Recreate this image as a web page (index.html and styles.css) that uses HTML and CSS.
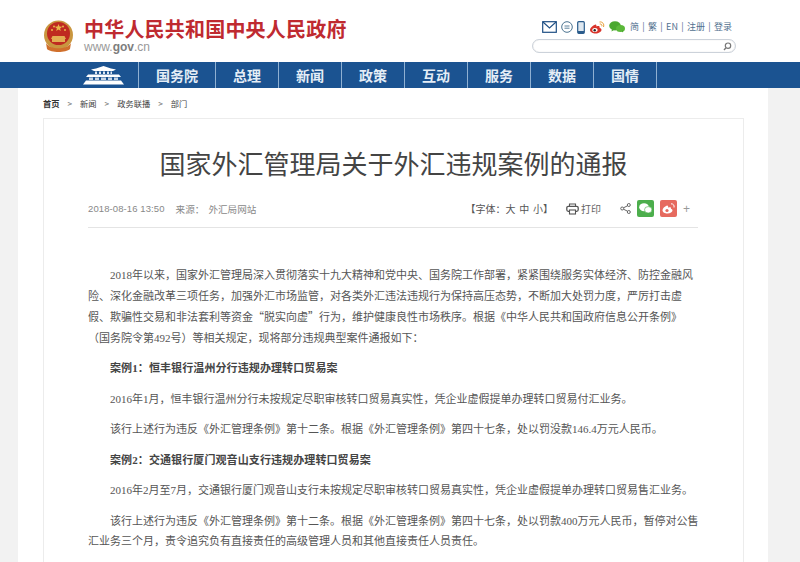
FILE: index.html
```html
<!DOCTYPE html>
<html lang="zh-CN">
<head>
<meta charset="utf-8">
<title>国家外汇管理局关于外汇违规案例的通报</title>
<link rel="stylesheet" href="styles.css">
</head>
<body>
<header class="top">
  <div class="brand">
    <svg class="emblem" width="31" height="33" viewBox="0 0 31 33">
      <circle cx="15.5" cy="15" r="14.5" fill="#c9963f"/>
      <circle cx="15.5" cy="13.5" r="11.5" fill="#bf2a20"/>
      <path d="M15.5 4l1 2.6 2.7.1-2.1 1.7.7 2.6-2.3-1.5-2.3 1.5.7-2.6-2.1-1.7 2.7-.1z" fill="#e8b84a"/>
      <circle cx="9" cy="10" r="1" fill="#e8b84a"/><circle cx="22" cy="10" r="1" fill="#e8b84a"/>
      <circle cx="11" cy="6.500" r="1" fill="#e8b84a"/><circle cx="20" cy="6.500" r="1" fill="#e8b84a"/>
      <path d="M8 19h15l-1.500-3h-12zM9 19h13v3H9z" fill="#e3ad52"/>
      <path d="M3 23c4 7 21 7 25 0l-1 6c-4 4-19 4-23 0z" fill="#d0702c"/>
    </svg>
    <div class="brand-text">
      <div class="site-name">中华人民共和国中央人民政府</div>
      <div class="site-url">www.<b>gov</b>.cn</div>
    </div>
  </div>
  <div class="tools">
    <div class="tool-row">
      <svg class="ic" width="15" height="12" viewBox="0 0 15 12"><rect x=".7" y=".7" width="13.600" height="10.600" fill="none" stroke="#1f4f84" stroke-width="1.200"/><path d="M1 1l6.500 6L14 1" fill="none" stroke="#1f4f84" stroke-width="1.100"/></svg>
      <svg class="ic" width="12" height="12" viewBox="0 0 12 12"><circle cx="6" cy="6" r="5.300" fill="none" stroke="#4b7390" stroke-width="1"/><path d="M3.500 5h5M3.500 7.200h5" stroke="#4b7390" stroke-width=".9"/></svg>
      <svg class="ic" width="8" height="13" viewBox="0 0 8 13"><rect x=".7" y=".7" width="6.600" height="11.600" rx="1" fill="#dfe8f0" stroke="#2b5c8c" stroke-width="1.200"/><rect x="1" y="10" width="6" height="2" fill="#2b5c8c"/></svg>
      <svg class="ic" width="16" height="13" viewBox="0 0 16 13"><path d="M6.500 3.500C3.500 4.500 1 7 1 9c0 2.300 3 3.500 5.500 3.500 3.300 0 6-1.700 6-3.700 0-1.300-1.300-1.700-2-2 .5-1.500-.7-2.300-3-1.200 0-1.300-.3-2.400-1-2.100z" fill="#d9342b"/><ellipse cx="6" cy="9" rx="2.700" ry="2.100" fill="#fff"/><circle cx="5.700" cy="9.200" r="1.200" fill="#222"/><path d="M10.500 1c3-.5 5 2 4 5M10.800 3c1.500-.2 2.500 1 2 2.300" fill="none" stroke="#e79a2e" stroke-width="1"/></svg>
      <svg class="ic" width="16" height="12" viewBox="0 0 16 12"><ellipse cx="6" cy="4.800" rx="5.800" ry="4.600" fill="#4aa82f"/><ellipse cx="11.500" cy="7.500" rx="4.500" ry="3.600" fill="#5bb83a"/><path d="M3 8l-.500 2.500L5 9zM12.500 10l1.500 1.500V9z" fill="#4aa82f"/></svg>
      <nav class="tool-links"><a>简</a><i>|</i><a>繁</a><i>|</i><a>EN</a><i>|</i><a>注册</a><i>|</i><a>登录</a></nav>
    </div>
    <div class="search">
      <svg width="9" height="9" viewBox="0 0 9 9"><circle cx="5" cy="3.700" r="2.700" fill="none" stroke="#777" stroke-width="1.200"/><path d="M3 5.700L1 8" stroke="#777" stroke-width="1.300"/></svg>
    </div>
  </div>
</header>

<nav class="mainnav">
  <div class="gate-cell">
    <svg width="41" height="19" viewBox="0 0 41 19">
      <path d="M8 3.500L13 2.500 20.500 0 28 2.500l5 1L30 5H11z" fill="#fff"/>
      <path d="M12 5.500h2v2.500h-2zM16 5.500h2v2.500h-2zM20 5.500h2v2.500h-2zM24 5.500h2v2.500h-2zM27.500 5.500h1.500v2.500h-1.500z" fill="#dfe8f2"/>
      <path d="M5 8.500h31l2 2.500H3z" fill="#fff"/>
      <path d="M6 11.500h4v2.500H6zM12 11.500h4v2.500h-4zM18 11.500h5v2.500h-5zM25 11.500h4v2.500h-4zM31 11.500h4v2.500h-4z" fill="#c8d6e6"/>
      <path d="M3 14.500h35l3 4H0z" fill="#fff"/>
    </svg>
  </div>
  <a>国务院</a><a>总理</a><a>新闻</a><a>政策</a><a>互动</a><a>服务</a><a>数据</a><a>国情</a>
</nav>

<main class="wrap">
  <div class="crumbs"><b>首页</b><i>&gt;</i><span>新闻</span><i>&gt;</i><span>政务联播</span><i>&gt;</i><span>部门</span></div>
  <article class="card">
    <h1>国家外汇管理局关于外汇违规案例的通报</h1>
    <div class="meta">
      <div class="meta-left"><span class="date">2018-08-16 13:50</span><span class="src">来源：</span><span>外汇局网站</span></div>
      <div class="meta-right">
        <span class="fontsize">【字体：大 中 小】</span>
        <svg class="print-ic" width="13" height="12" viewBox="0 0 13 12"><path d="M3.500 3V1h6v2" fill="none" stroke="#555" stroke-width="1.100"/><rect x=".8" y="3.300" width="11.400" height="5" rx="1.500" fill="none" stroke="#555" stroke-width="1.300"/><rect x="3.500" y="7" width="6" height="4" fill="#fff" stroke="#555" stroke-width="1.100"/></svg>
        <span class="print">打印</span>
        <svg class="share-ic" width="11" height="11" viewBox="0 0 11 11"><circle cx="2.200" cy="5.500" r="1.500" fill="none" stroke="#666"/><circle cx="8.800" cy="2" r="1.500" fill="none" stroke="#666"/><circle cx="8.800" cy="9" r="1.500" fill="none" stroke="#666"/><path d="M3.500 4.800l4-2M3.500 6.200l4 2" stroke="#666"/></svg>
        <span class="sq wx"><svg width="13" height="11" viewBox="0 0 13 11"><ellipse cx="5" cy="4.200" rx="4.800" ry="4" fill="#fff"/><ellipse cx="9.200" cy="6.800" rx="3.700" ry="3.200" fill="#fff" stroke="#4cae4c" stroke-width=".6"/></svg></span>
        <span class="sq wb"><svg width="13" height="11" viewBox="0 0 13 11"><path d="M5 2.500C2.500 3.500 .5 5.500.5 7.200.5 9.200 3 10.500 5.500 10.500c2.800 0 5-1.500 5-3.200 0-1-1-1.400-1.600-1.600.5-1.300-.6-1.900-2.500-1 0-1.200-.8-2.700-1.400-2.200z" fill="#fff"/><circle cx="5" cy="7.500" r="1.600" fill="#e66a5f"/><path d="M9 .8c2-.2 3.700 1.500 3 3.700" fill="none" stroke="#fff"/></svg></span>
        <span class="plus">+</span>
      </div>
    </div>
    <div class="body">
      <p class="ind">2018年以来，国家外汇管理局深入贯彻落实十九大精神和党中央、国务院工作部署，紧紧围绕服务实体经济、防控金融风险、深化金融改革三项任务，加强外汇市场监管，对各类外汇违法违规行为保持高压态势，不断加大处罚力度，严厉打击虚假、欺骗性交易和非法套利等资金<span class="cq">“</span>脱实向虚<span class="cq">”</span>行为，维护健康良性市场秩序。根据《中华人民共和国政府信息公开条例》（国务院令第492号）等相关规定，现将部分违规典型案件通报如下：</p>
      <p class="ind"><strong>案例1：恒丰银行温州分行违规办理转口贸易案</strong></p>
      <p class="ind">2016年1月，恒丰银行温州分行未按规定尽职审核转口贸易真实性，凭企业虚假提单办理转口贸易付汇业务。</p>
      <p class="ind">该行上述行为违反《外汇管理条例》第十二条。根据《外汇管理条例》第四十七条，处以罚没款146.4万元人民币。</p>
      <p class="ind"><strong>案例2：交通银行厦门观音山支行违规办理转口贸易案</strong></p>
      <p class="ind">2016年2月至7月，交通银行厦门观音山支行未按规定尽职审核转口贸易真实性，凭企业虚假提单办理转口贸易售汇业务。</p>
      <p class="ind wide">该行上述行为违反《外汇管理条例》第十二条。根据《外汇管理条例》第四十七条，处以罚款400万元人民币，暂停对公售汇业务三个月，责令追究负有直接责任的高级管理人员和其他直接责任人员责任。</p>
    </div>
  </article>
</main>
</body>
</html>
```
FILE: styles.css
```css
html, body { margin: 0; padding: 0; height: 562px; overflow: hidden; }
body { background: #f2f2f2; font-family: "Liberation Serif", "Noto Sans CJK SC", serif; color: #444; }
a { text-decoration: none; color: inherit; }
i { font-style: normal; }

.top { height: 62px; background: #fff; display: flex; justify-content: space-between; }
.brand { display: flex; padding: 19px 0 0 43px; gap: 10px; align-items: flex-start; }
.emblem { margin-top: 1px; }
.site-name { font: bold 20px/20px "Noto Sans CJK SC", sans-serif; letter-spacing: .2px; color: #bf2a30; }
.site-url { font: 12px/14px "Liberation Sans", sans-serif; color: #999; margin-top: 1px; }
.site-url b { font-weight: bold; color: #7d7d7d; }

.tools { width: 204px; margin-right: 64px; padding-top: 20px; }
.tool-row { display: flex; align-items: center; gap: 4px; height: 14px; padding-left: 10px; }
.tool-links { display: flex; gap: 3.300px; margin-left: 1px; font: 9px/12px "Noto Sans CJK SC", sans-serif; color: #52718f; }
.tool-links i { color: #52718f; }
.search { margin-top: 5px; height: 12px; border: 1px solid #ccd2da; border-radius: 7px; display: flex; justify-content: flex-end; align-items: center; padding-right: 3px; box-shadow: inset 0 0 1px #ccc; }

.mainnav { height: 26px; background: #1b5391; display: flex; font: bold 14px/26px "Noto Sans CJK SC", sans-serif; color: #e4edf6; padding-left: 83px; }
.gate-cell { width: 55px; display: flex; align-items: center; }
.mainnav a { width: 62px; text-align: center; border-left: 1px solid #8fb0d2; }
.gate-cell + a { width: 76px; }
.mainnav a:last-child { border-right: 1px solid #8fb0d2; }

.wrap { width: 750px; margin-left: 18px; background: #fff; padding: 0 24px 0 25px; box-sizing: border-box; height: 474px; overflow: hidden; }
.crumbs { height: 30px; display: flex; align-items: center; font: 8.250px/30px "Noto Sans CJK SC", sans-serif; color: #444; gap: 8px; }
.crumbs b { color: #333; }
.crumbs i { color: #777; }

.card { border: 1px solid #ececec; border-bottom: 0; padding: 0 45px 0 44px; height: 444px; }
h1 { margin: 26px 0 0; padding-left: 1px; font: 400 26px/36px "Noto Sans CJK SC", sans-serif; color: #444; text-align: center; }
.meta { margin-top: 20px; height: 15px; padding-bottom: 11px; display: flex; justify-content: space-between; align-items: center; border-bottom: 1px solid #e4e4e4; font: 9.600px/14px "Noto Sans CJK SC", sans-serif; color: #888; }
.meta-left { display: flex; }
.date { font-family: "Liberation Sans", sans-serif; font-size: 9.500px; letter-spacing: .1px; margin-right: 11px; }
.src { margin-right: 4px; }
.meta-right { display: flex; align-items: center; }
.fontsize { font-size: 10px; word-spacing: 1.500px; color: #555; margin-right: 13px; }
.print { font-size: 10px; color: #666; margin-left: 2px; margin-right: 19px; }
.print-ic { display: block; }
.share-ic { display: block; margin-right: 6px; }
.sq { width: 17px; height: 17px; border-radius: 2px; display: flex; align-items: center; justify-content: center; margin-right: 6px; }
.wx { background: #4cae4c; }
.wb { background: #e66a5f; }
.plus { font: 12px/12px "Liberation Sans", sans-serif; color: #999; margin-right: 8px; }

.body { margin-top: 37.300px; font-size: 11px; line-height: 20.500px; color: #555; }
.body p { margin: 0 0 10px; }
.body .wide { margin-right: -2px; }
.ind { text-indent: 22px; }
.cq { font-family: "Noto Sans CJK SC", sans-serif; }
.body strong { color: #444; letter-spacing: .1px; }
```
